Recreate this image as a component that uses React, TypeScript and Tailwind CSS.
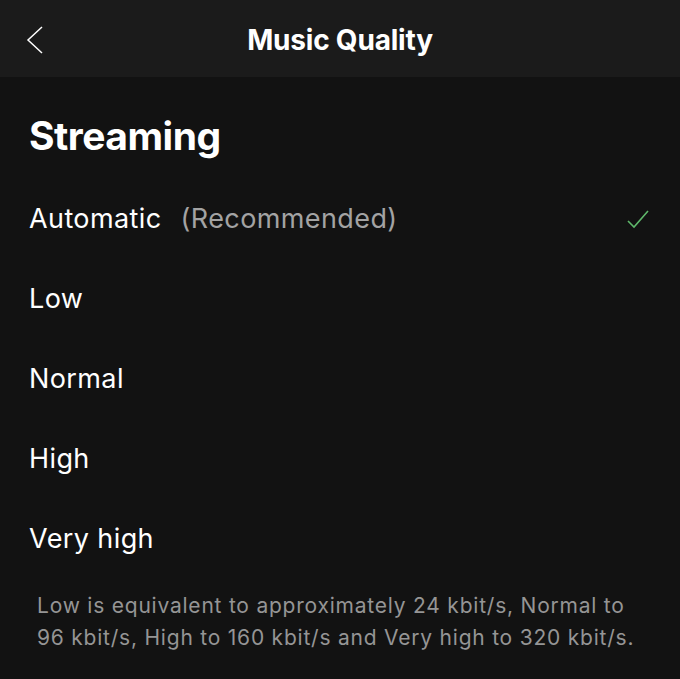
const options = ["Automatic", "Low", "Normal", "High", "Very high"];

const App = () => {
  const selected = "Automatic";

  return (
    <div className="w-[680px] h-[679px] bg-[#121212] text-white overflow-hidden font-['Inter',sans-serif]">
      <header className="h-[77px] bg-[#1b1b1b] relative flex items-center justify-center">
        <button className="absolute left-[24px] top-[24px]">
          <svg width="22" height="32" viewBox="0 0 22 32" fill="none">
            <path d="M18 3 L4 16 L18 29" stroke="#ffffff" strokeWidth="1.5" />
          </svg>
        </button>
        <h1 className="pt-[3px] text-[28px] font-bold tracking-[-0.2px]">Music Quality</h1>
      </header>

      <section className="pl-[29px] pr-[30px]">
        <h2 className="pt-[35px] text-[39px] font-bold tracking-[-0.5px] leading-[48px]">Streaming</h2>

        <ul className="mt-[19px]">
          {options.map((opt) => (
            <li key={opt} className="h-[80px] flex items-center justify-between text-[27px] tracking-[0.4px]">
              <span>
                {opt}
                {opt === "Automatic" && <span className="ml-[19px] text-[#a3a3a3]">(Recommended)</span>}
              </span>
              {opt === selected && (
                <svg width="24" height="22" viewBox="0 0 24 22" fill="none">
                  <path d="M2 13 L8 19 L22 3" stroke="#5fb86b" strokeWidth="1.6" />
                </svg>
              )}
            </li>
          ))}
        </ul>
      </section>

      <p className="ml-[37px] w-[606px] mt-[11px] text-[21px] tracking-[0.78px] leading-[32px] text-[#959595]">
        Low is equivalent to approximately 24 kbit/s, Normal to 96 kbit/s, High to 160 kbit/s and Very high to 320 kbit/s.
      </p>
    </div>
  );
};

export default App;
